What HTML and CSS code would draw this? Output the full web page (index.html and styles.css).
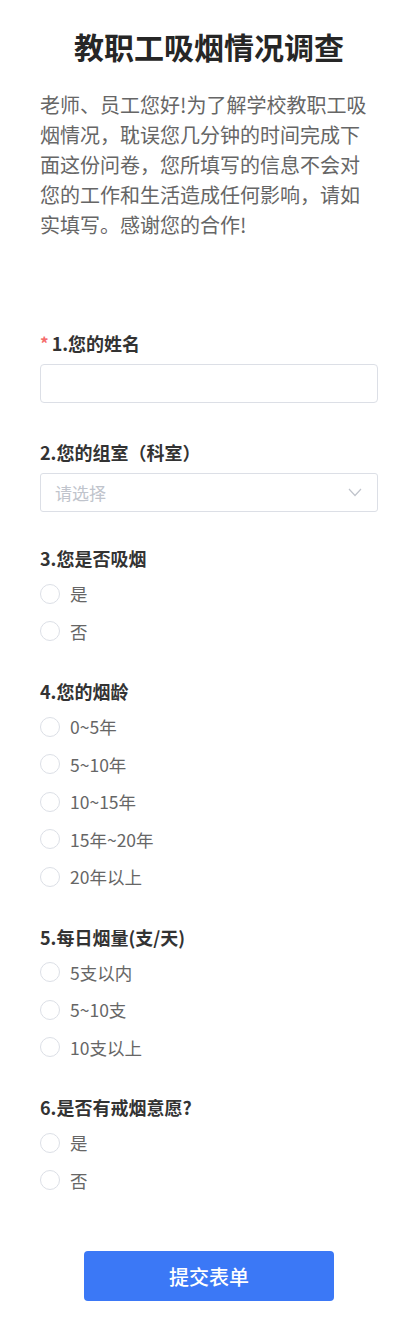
FILE: index.html
```html
<!DOCTYPE html>
<html>
<head>
    <meta charset="UTF-8">
    <title>教职工吸烟情况调查</title>
    <link rel="stylesheet" href="styles.css">
</head>
<body>
    <div class="survey">
        <div class="survey-head">
            <h1>教职工吸烟情况调查</h1>
            <p class="intro">老师、员工您好!为了解学校教职工吸烟情况，耽误您几分钟的时间完成下面这份问卷，您所填写的信息不会对您的工作和生活造成任何影响，请如实填写。感谢您的合作!</p>
        </div>

        <form class="survey-form">
            <!--填空题-->
            <div class="question q-field">
                <div class="q-title"><span class="required">*</span>1.您的姓名</div>
                <input type="text" class="text-input" name="name">
            </div>

            <div class="question q-field q-select">
                <div class="q-title">2.您的组室（科室）</div>
                <div class="select-box">
                    <span class="placeholder">请选择</span>
                    <svg class="arrow" width="14" height="9" viewBox="0 0 14 9">
                        <polyline points="1,1 7,7.5 13,1" fill="none" stroke="#c0c4cc" stroke-width="1.2"/>
                    </svg>
                </div>
            </div>

            <!--单选题-->
            <div class="question">
                <div class="q-title">3.您是否吸烟</div>
                <label class="option"><input type="radio" name="q3"><span>是</span></label>
                <label class="option"><input type="radio" name="q3"><span>否</span></label>
            </div>

            <div class="question">
                <div class="q-title">4.您的烟龄</div>
                <label class="option"><input type="radio" name="q4"><span>0~5年</span></label>
                <label class="option"><input type="radio" name="q4"><span>5~10年</span></label>
                <label class="option"><input type="radio" name="q4"><span>10~15年</span></label>
                <label class="option"><input type="radio" name="q4"><span>15年~20年</span></label>
                <label class="option"><input type="radio" name="q4"><span>20年以上</span></label>
            </div>

            <div class="question">
                <div class="q-title">5.每日烟量(支/天)</div>
                <label class="option"><input type="radio" name="q5"><span>5支以内</span></label>
                <label class="option"><input type="radio" name="q5"><span>5~10支</span></label>
                <label class="option"><input type="radio" name="q5"><span>10支以上</span></label>
            </div>

            <div class="question">
                <div class="q-title">6.是否有戒烟意愿?</div>
                <label class="option"><input type="radio" name="q6"><span>是</span></label>
                <label class="option"><input type="radio" name="q6"><span>否</span></label>
            </div>

            <div class="submit-row">
                <button type="button" class="submit-btn">提交表单</button>
            </div>
        </form>
    </div>
</body>
</html>
```

FILE: styles.css
```css
* {
    margin: 0;
    padding: 0;
    box-sizing: border-box;
}
body {
    font-family: "Noto Sans CJK SC", "Noto Sans", sans-serif;
    color: #333;
    background-color: #fff;
}
.survey {
    width: 418px;
    padding: 26px 40px 20px;
}
.survey-head h1 {
    font-size: 30px;
    line-height: 40px;
    font-weight: bold;
    color: #262626;
    text-align: center;
}
.intro {
    margin-top: 24px;
    font-size: 20px;
    line-height: 30px;
    color: #666;
}
.survey-form {
    margin-top: 92px;
}
.question {
    margin-bottom: 30px;
}
.q-title {
    font-size: 18px;
    line-height: 22px;
    font-weight: bold;
    color: #333;
    margin-bottom: 6px;
}
.required {
    color: #f56c6c;
    font-size: 17px;
    font-weight: bold;
    margin-right: 3px;
    vertical-align: top;
    line-height: 22px;
}
.q-field {
    margin-bottom: 38px;
}
.q-select {
    margin-bottom: 35px;
}
.q-field .q-title {
    margin-bottom: 10px;
}
.text-input {
    display: block;
    width: 100%;
    height: 39px;
    border: 1px solid #dcdfe6;
    border-radius: 4px;
    outline: none;
    padding: 0 14px;
    font-size: 17px;
}
.select-box {
    display: flex;
    align-items: center;
    justify-content: space-between;
    height: 39px;
    border: 1px solid #dcdfe6;
    border-radius: 3px;
    padding: 0 15px 0 14px;
}
.placeholder {
    font-size: 17px;
    color: #c0c4cc;
}
.option {
    display: flex;
    align-items: center;
    height: 37.5px;
    font-size: 17.5px;
    color: #666;
    cursor: pointer;
}
.option input {
    appearance: none;
    -webkit-appearance: none;
    width: 20px;
    height: 20px;
    border: 1px solid #dcdfe6;
    border-radius: 50%;
    margin-right: 10px;
    background-color: #fff;
    flex-shrink: 0;
}
.option input:checked {
    border: 6px solid #3b78f6;
}
.submit-row {
    padding-top: 22px;
    text-align: center;
}
.submit-btn {
    width: 250px;
    height: 50px;
    border: none;
    border-radius: 4px;
    background-color: #3b78f6;
    color: #fff;
    font-family: "Noto Sans CJK SC", sans-serif;
    font-size: 20px;
    font-weight: 500;
    cursor: pointer;
}
```
